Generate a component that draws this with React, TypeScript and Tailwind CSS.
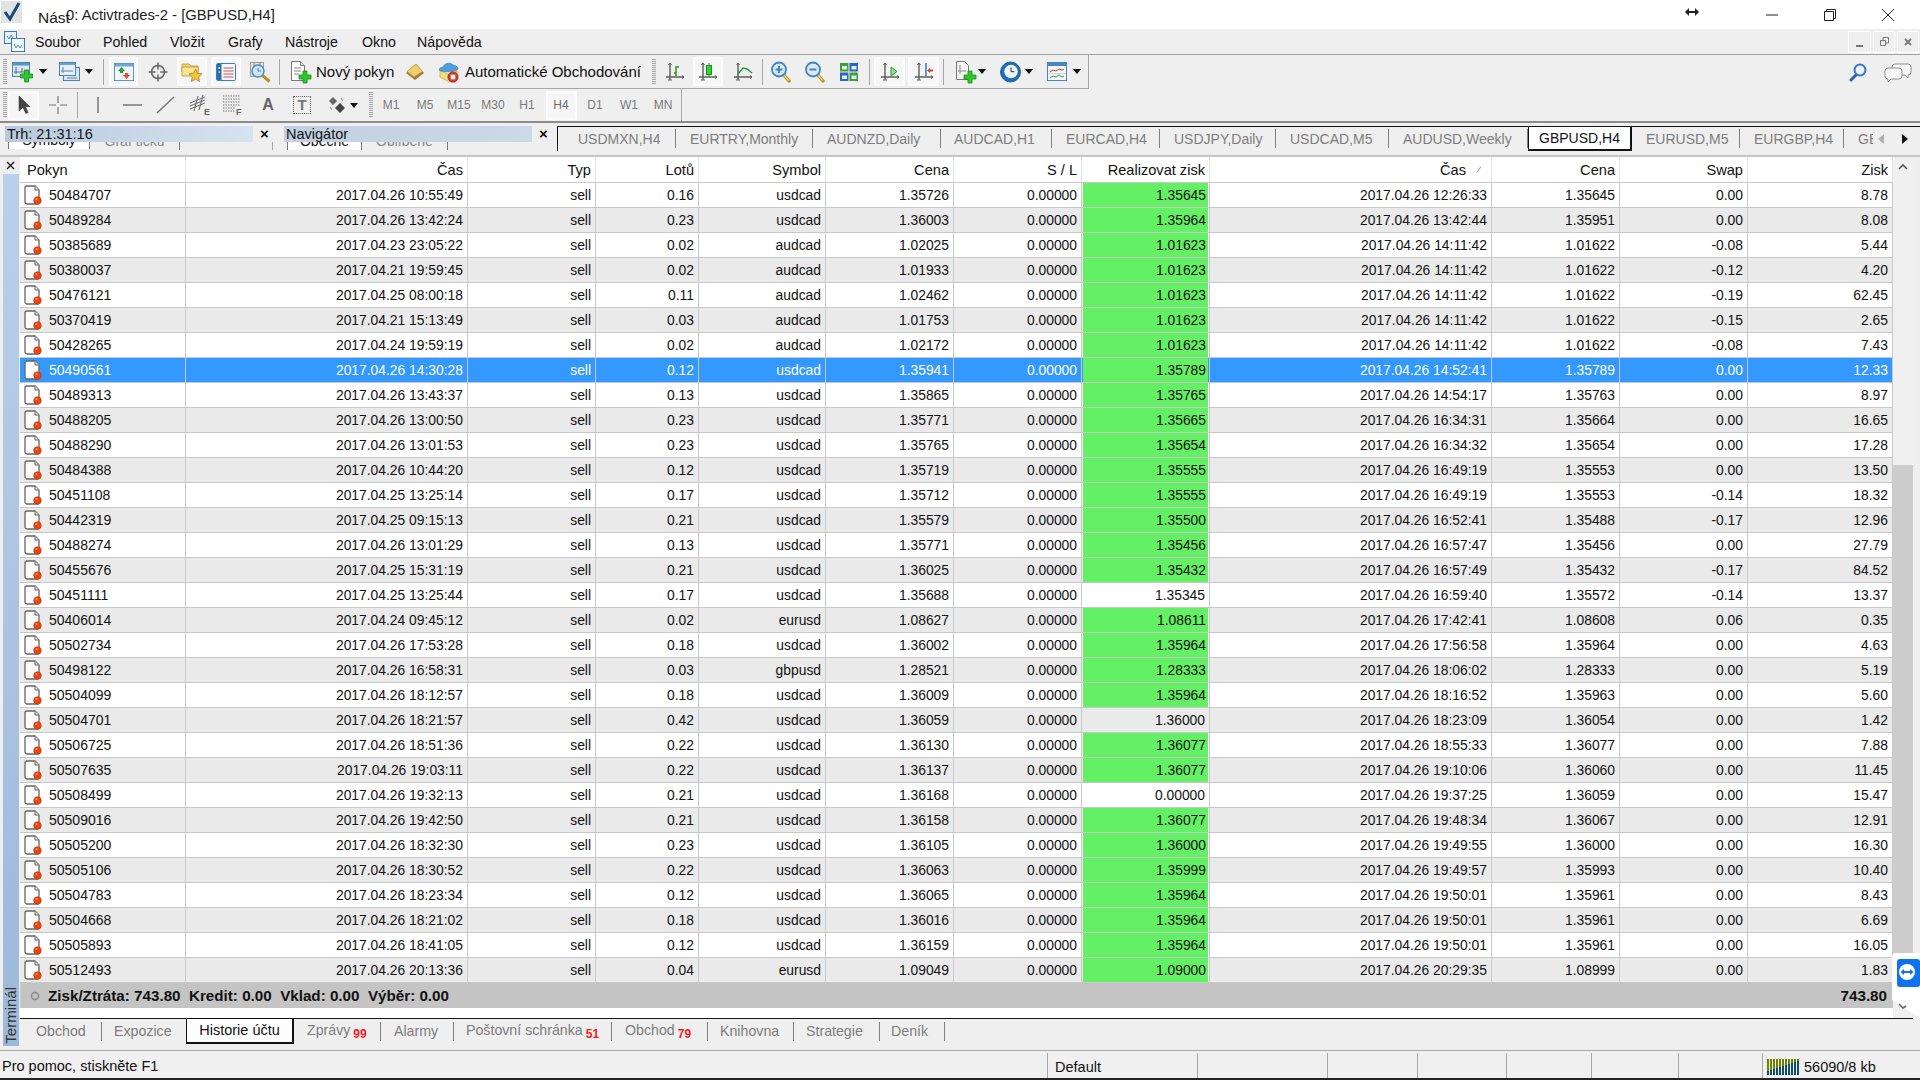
import React from "react";

type R = [string, string, string, string, string, string, string, string, string, string];
const d = "2017.04.26 ";
const rows: R[] = [
  ["50484707", "2017.04.26 10:55:49", "0.16", "usdcad", "1.35726", "1.35645", d + "12:26:33", "1.35645", "0.00", "8.78"],
  ["50489284", "2017.04.26 13:42:24", "0.23", "usdcad", "1.36003", "1.35964", d + "13:42:44", "1.35951", "0.00", "8.08"],
  ["50385689", "2017.04.23 23:05:22", "0.02", "audcad", "1.02025", "1.01623", d + "14:11:42", "1.01622", "-0.08", "5.44"],
  ["50380037", "2017.04.21 19:59:45", "0.02", "audcad", "1.01933", "1.01623", d + "14:11:42", "1.01622", "-0.12", "4.20"],
  ["50476121", "2017.04.25 08:00:18", "0.11", "audcad", "1.02462", "1.01623", d + "14:11:42", "1.01622", "-0.19", "62.45"],
  ["50370419", "2017.04.21 15:13:49", "0.03", "audcad", "1.01753", "1.01623", d + "14:11:42", "1.01622", "-0.15", "2.65"],
  ["50428265", "2017.04.24 19:59:19", "0.02", "audcad", "1.02172", "1.01623", d + "14:11:42", "1.01622", "-0.08", "7.43"],
  ["50490561", "2017.04.26 14:30:28", "0.12", "usdcad", "1.35941", "1.35789", d + "14:52:41", "1.35789", "0.00", "12.33"],
  ["50489313", "2017.04.26 13:43:37", "0.13", "usdcad", "1.35865", "1.35765", d + "14:54:17", "1.35763", "0.00", "8.97"],
  ["50488205", "2017.04.26 13:00:50", "0.23", "usdcad", "1.35771", "1.35665", d + "16:34:31", "1.35664", "0.00", "16.65"],
  ["50488290", "2017.04.26 13:01:53", "0.23", "usdcad", "1.35765", "1.35654", d + "16:34:32", "1.35654", "0.00", "17.28"],
  ["50484388", "2017.04.26 10:44:20", "0.12", "usdcad", "1.35719", "1.35555", d + "16:49:19", "1.35553", "0.00", "13.50"],
  ["50451108", "2017.04.25 13:25:14", "0.17", "usdcad", "1.35712", "1.35555", d + "16:49:19", "1.35553", "-0.14", "18.32"],
  ["50442319", "2017.04.25 09:15:13", "0.21", "usdcad", "1.35579", "1.35500", d + "16:52:41", "1.35488", "-0.17", "12.96"],
  ["50488274", "2017.04.26 13:01:29", "0.13", "usdcad", "1.35771", "1.35456", d + "16:57:47", "1.35456", "0.00", "27.79"],
  ["50455676", "2017.04.25 15:31:19", "0.21", "usdcad", "1.36025", "1.35432", d + "16:57:49", "1.35432", "-0.17", "84.52"],
  ["50451111", "2017.04.25 13:25:44", "0.17", "usdcad", "1.35688", "!1.35345", d + "16:59:40", "1.35572", "-0.14", "13.37"],
  ["50406014", "2017.04.24 09:45:12", "0.02", "eurusd", "1.08627", "1.08611", d + "17:42:41", "1.08608", "0.06", "0.35"],
  ["50502734", "2017.04.26 17:53:28", "0.18", "usdcad", "1.36002", "1.35964", d + "17:56:58", "1.35964", "0.00", "4.63"],
  ["50498122", "2017.04.26 16:58:31", "0.03", "gbpusd", "1.28521", "1.28333", d + "18:06:02", "1.28333", "0.00", "5.19"],
  ["50504099", "2017.04.26 18:12:57", "0.18", "usdcad", "1.36009", "1.35964", d + "18:16:52", "1.35963", "0.00", "5.60"],
  ["50504701", "2017.04.26 18:21:57", "0.42", "usdcad", "1.36059", "!1.36000", d + "18:23:09", "1.36054", "0.00", "1.42"],
  ["50506725", "2017.04.26 18:51:36", "0.22", "usdcad", "1.36130", "1.36077", d + "18:55:33", "1.36077", "0.00", "7.88"],
  ["50507635", "2017.04.26 19:03:11", "0.22", "usdcad", "1.36137", "1.36077", d + "19:10:06", "1.36060", "0.00", "11.45"],
  ["50508499", "2017.04.26 19:32:13", "0.21", "usdcad", "1.36168", "!0.00000", d + "19:37:25", "1.36059", "0.00", "15.47"],
  ["50509016", "2017.04.26 19:42:50", "0.21", "usdcad", "1.36158", "1.36077", d + "19:48:34", "1.36067", "0.00", "12.91"],
  ["50505200", "2017.04.26 18:32:30", "0.23", "usdcad", "1.36105", "1.36000", d + "19:49:55", "1.36000", "0.00", "16.30"],
  ["50505106", "2017.04.26 18:30:52", "0.22", "usdcad", "1.36063", "1.35999", d + "19:49:57", "1.35993", "0.00", "10.40"],
  ["50504783", "2017.04.26 18:23:34", "0.12", "usdcad", "1.36065", "1.35964", d + "19:50:01", "1.35961", "0.00", "8.43"],
  ["50504668", "2017.04.26 18:21:02", "0.18", "usdcad", "1.36016", "1.35964", d + "19:50:01", "1.35961", "0.00", "6.69"],
  ["50505893", "2017.04.26 18:41:05", "0.12", "usdcad", "1.36159", "1.35964", d + "19:50:01", "1.35961", "0.00", "16.05"],
  ["50512493", "2017.04.26 20:13:36", "0.04", "eurusd", "1.09049", "1.09000", d + "20:29:35", "1.08999", "0.00", "1.83"],
];

/* ---------- icons ---------- */
const Plus = ({ x, y, s = 1 }: { x: number; y: number; s?: number }) => (
  <path transform={`translate(${x} ${y}) scale(${s})`} d="M4 0h4v4h4v4H8v4H4V8H0V4h4z" fill="#2fc52f" stroke="#1b8f1b" strokeWidth="0.8" />
);
const Axes = () => (
  <g stroke="#5f5f5f" strokeWidth="1.4" fill="none">
    <path d="M5 2v17M1 16h18" />
    <path d="M3.500 4L5 2l1.500 2M3 19h4M17 14.500l2 1.500-2 1.500" strokeWidth="1" />
  </g>
);
const S = ({ w = 20, h = 22, c }: { w?: number; h?: number; c: React.ReactNode }) => (
  <svg width={w} height={h} viewBox={`0 0 ${w} ${h}`} className="block shrink-0">{c}</svg>
);
const Drop = () => (
  <svg width="8" height="5" viewBox="0 0 8 5" className="block"><path d="M0 0h8L4 5z" fill="#111" /></svg>
);
const Lens = ({ kind }: { kind: "+" | "-" }) => (
  <S c={<g>
    <path d="M12 13l6 7" stroke="#b98f2a" strokeWidth="3.4" strokeLinecap="round" />
    <path d="M12.500 13.500l5 6" stroke="#f2d676" strokeWidth="1.2" />
    <circle cx="8" cy="8.500" r="7" fill="#dbeaf8" stroke="#3f86c4" strokeWidth="1.8" />
    <path d={kind === "+" ? "M4.500 8.500h7M8 5v7" : "M4.500 8.500h7"} stroke="#3f86c4" strokeWidth="2" />
  </g>} />
);

const Icons = {
  NewChart: <S w={22} h={24} c={<g><rect x=".5" y="2.500" width="17" height="14" fill="#d7e6f5" stroke="#4d82b5" /><rect x="1" y="3" width="16" height="2.500" fill="#5d94c8" /><path d="M4 7v7M2 12h12M10 8v4" stroke="#5f6f7f" strokeWidth="1" /><Plus x={8.5} y={10} /></g>} />,
  Chart2: <S w={22} h={24} c={<g><rect x="4.500" y="7.500" width="16" height="13" fill="#d7e6f5" stroke="#4d82b5" /><rect x=".5" y="2.500" width="16" height="13" fill="#e6eff8" stroke="#4d82b5" /><rect x="1" y="3" width="15" height="2" fill="#6ea0d0" /><path d="M4 7v6M2 11h12M8 18h10" stroke="#6f7f8f" strokeWidth="1" /></g>} />,
  Market: <S w={20} h={20} c={<g><rect x=".5" y="1.500" width="19" height="17" fill="#f3f7fc" stroke="#5b97cf" /><rect x="1" y="2" width="18" height="2.500" fill="#6ea6da" /><path d="M4 9l3.500-4L11 9H9v2H6V9z" fill="#27a327" /><path d="M9 13h2v-2h3v2h2l-3.500 4z" fill="#e0522a" /></g>} />,
  Cross: <S c={<g fill="none" stroke="#666" strokeWidth="1.5"><circle cx="10" cy="11" r="6.500" /><path d="M10 1.500v7M10 13.500v7M.5 11h7M12.500 11h7" /></g>} />,
  FolderStar: <S w={22} h={22} c={<g><path d="M1 6V3h7l2 2h7v6H1z" fill="#f5d66b" stroke="#b9923a" strokeWidth=".8" /><path d="M1 6h16v9H1z" fill="#fbe68f" stroke="#b9923a" strokeWidth=".8" /><path d="M14.500 8l2 4.200 4.500.6-3.300 3.100.9 4.600-4.100-2.300-4.100 2.300.9-4.600L8 12.800l4.500-.6z" fill="#f0c53c" stroke="#a8842c" strokeWidth=".8" /></g>} />,
  Navig: <S w={20} h={20} c={<g><rect x=".5" y="1.500" width="19" height="17" rx="1" fill="#f2f6fb" stroke="#3d7fb8" /><rect x="1" y="2" width="4.500" height="16" fill="#2c6ea8" /><circle cx="3.200" cy="6" r="1" fill="#fff" /><circle cx="3.200" cy="10" r="1" fill="#f0c53c" /><path d="M7.500 6h10M7.500 9h10M7.500 12h10M7.500 15h10" stroke="#c85a55" strokeWidth="1" /></g>} />,
  ClockMag: <S w={23} h={22} c={<g><rect x="1.500" y="1.500" width="13" height="14" fill="#e6e2da" stroke="#a39f95" /><path d="M5 1v4M11 1v4" stroke="#8a8578" /><circle cx="9" cy="10" r="6" fill="#cfe3f6" stroke="#4a8fc6" strokeWidth="1.5" /><path d="M9 7v3h3" stroke="#4a7fb8" fill="none" /><path d="M13.500 14.500l7 6" stroke="#b98f2a" strokeWidth="3" /></g>} />,
  NewOrder: <S w={22} h={24} c={<g><path d="M1.500 1.500h9l4 4v15h-13z" fill="#fff" stroke="#777" /><path d="M10.500 1.500v4h4" fill="#ddd" stroke="#777" /><path d="M4 8h7M4 11h7M4 14h5" stroke="#8a8a8a" /><Plus x={9} y={11} /></g>} />,
  Book: <S c={<g><path d="M1 12L11 3l8 9-9 7z" fill="#a9783a" /><path d="M2 10.500L11 3l6.500 7.500L9 16z" fill="#f2cf6c" stroke="#b98f3a" strokeWidth=".7" /></g>} />,
  Hat: <S w={21} h={23} c={<g><path d="M2 10l9 5 8-4v6l-8 5-9-5z" fill="#f5dc7e" stroke="#bf9a3e" strokeWidth=".6" /><path d="M1 10c0-2 3-3 4-3 1-4 8-5 10-2 2 0 5 2 5 4-3 3-14 4-19 1z" fill="#4f9fdd" stroke="#2f78b5" strokeWidth=".6" /><circle cx="15" cy="17" r="5.200" fill="#d93a23" stroke="#a32310" strokeWidth=".6" /><rect x="12.700" y="14.700" width="4.600" height="4.600" fill="#fff" /></g>} />,
  Bars: <S c={<g><Axes /><path d="M11 15V6h3M11 12h-2" stroke="#2aa02a" strokeWidth="1.6" fill="none" /></g>} />,
  Candle: <S c={<g><Axes /><path d="M11 2v14" stroke="#1d8f1d" /><rect x="8.500" y="4.500" width="5" height="9" fill="#2dd82d" stroke="#1d8f1d" /></g>} />,
  Line: <S c={<g><Axes /><path d="M5 13l5-6 4 1 5 4" stroke="#2f8f4f" strokeWidth="1.5" fill="none" /></g>} />,
  Tile: <S c={<g><rect x="1" y="2" width="8.500" height="8.500" fill="#3aa03a" /><rect x="10.500" y="2" width="8.500" height="8.500" fill="#2f66c4" /><rect x="1" y="11.500" width="8.500" height="8.500" fill="#2f66c4" /><rect x="10.500" y="11.500" width="8.500" height="8.500" fill="#3aa03a" /><rect x="3" y="5" width="5" height="3.500" fill="#e8f2e8" /><rect x="12.500" y="5" width="5" height="3.500" fill="#e4ecf8" /><rect x="3" y="14.500" width="5" height="3.500" fill="#e4ecf8" /><rect x="12.500" y="14.500" width="5" height="3.500" fill="#e8f2e8" /></g>} />,
  Shift: <S c={<g><Axes /><path d="M11 6l6 4.500-6 4.500z" fill="#8ee08e" stroke="#2aa02a" /></g>} />,
  Auto: <S c={<g><Axes /><path d="M12 2v13" stroke="#2f6fb5" strokeWidth="1.4" /><path d="M19 8.500h-3V7l-3 2.500 3 2.500v-1.500h3z" fill="#d8432a" /></g>} />,
  Add: <S w={22} h={24} c={<g><path d="M1.500 1.500h8l4 4v14h-12z" fill="#f4f4f4" stroke="#777" /><path d="M5 5v9M3 11h8" stroke="#888" /><Plus x={9} y={11} /></g>} />,
  Clock: <S w={21} h={22} c={<g><circle cx="10.500" cy="11" r="10" fill="#1b6fb8" /><circle cx="10.500" cy="11" r="10" fill="none" stroke="#0e4f8c" strokeWidth=".8" /><circle cx="11" cy="10.500" r="6.800" fill="#eef6fd" /><path d="M11 6.500v4.200h3.500" stroke="#333" strokeWidth="1" fill="none" /></g>} />,
  Tpl: <S w={20} h={21} c={<g><rect x=".5" y="1.500" width="19" height="18" fill="#f2f7fc" stroke="#4a86bf" /><rect x="1" y="2" width="18" height="3" fill="#4a86bf" /><path d="M3 11l3-2 3 1 3-2 3 1 2-1" stroke="#c0492f" fill="none" /><path d="M3 17l3-2 3 1 3-2 3 2 2-1" stroke="#3f9a3f" fill="none" /><path d="M1 12.500h18" stroke="#c5d6e6" /></g>} />,
  Cursor: <S w={14} h={20} c={<path d="M2 1v15l4-3.500 2.800 6 2.400-1-2.800-5.800h4.600z" fill="#444" stroke="#333" strokeWidth=".5" />} />,
  Crossh: <S c={<path d="M10 2v7M10 13v7M1 11h7M12 11h7" stroke="#777" strokeWidth="1.2" />} />,
  VL: <S c={<path d="M10 3v16" stroke="#777" strokeWidth="1.500" />} />,
  HL: <S c={<path d="M1 11h19" stroke="#777" strokeWidth="1.500" />} />,
  TL: <S c={<path d="M1 19L18 3" stroke="#777" strokeWidth="1.500" />} />,
  FibE: <S w={22} h={24} c={<g stroke="#666" strokeWidth="1" fill="none"><path d="M1 10l15-6M1 13l15-6M1 16l15-6M5 18L9 3M10 17l4-15" /><text x="15" y="22" fontSize="9" fontWeight="700" fill="#666" stroke="none" fontFamily="Liberation Sans">E</text></g>} />,
  FibF: <S w={22} h={24} c={<g stroke="#777" strokeWidth="1" strokeDasharray="1.500 1" fill="none"><path d="M1 3h17M1 6h17M1 9h17M1 12h17M1 15h12M1 18h12" /><text x="14" y="22" fontSize="9" fontWeight="700" fill="#666" stroke="none" strokeDasharray="0" fontFamily="Liberation Sans">F</text></g>} />,
  Shapes: <S w={20} h={20} c={<g><path d="M6 2l4 4-4 4-4-4z" fill="#666" /><path d="M13 8l5 5-5 5-5-5z" fill="#444" /><path d="M3 12l2 3M14 3l2 3" stroke="#999" /></g>} />,
  Doc: <svg width="18" height="20" viewBox="0 0 18 20" className="block shrink-0"><path d="M1 3a2 2 0 0 1 2-2h8l4 4v12a2 2 0 0 1-2 2H3a2 2 0 0 1-2-2z" fill="#fbfbfb" stroke="#666" strokeWidth="1.300" /><path d="M11 1v4h4" fill="#e2e2e2" stroke="#666" /><circle cx="13.500" cy="15.500" r="3.800" fill="#e8450f" stroke="#b8380c" strokeWidth=".6" /><circle cx="12.500" cy="14.300" r="1" fill="#ff9a6a" /></svg>,
  Search: <S w={18} h={20} c={<g><path d="M8 12l-6 6" stroke="#2f5fae" strokeWidth="3" strokeLinecap="round" /><circle cx="11" cy="8" r="5.500" fill="#e8f2fb" stroke="#3a72c0" strokeWidth="2" /></g>} />,
  Chat: <S w={28} h={20} c={<g fill="#f7f7f7" stroke="#909090"><path d="M11 2h13a3 3 0 0 1 3 3v5a3 3 0 0 1-3 3v3l-3-3H11a3 3 0 0 1-3-3V5a3 3 0 0 1 3-3z" /><path d="M4 6h11a3 3 0 0 1 3 3v5a3 3 0 0 1-3 3H7l-3 3v-3a3 3 0 0 1-3-3V9a3 3 0 0 1 3-3z" /></g>} />,
};

const Grip = ({ cls }: { cls: string }) => (
  <div className={`${cls} h-[26px] w-[4px] shrink-0 bg-[repeating-linear-gradient(to_bottom,#a6a6a6_0,#a6a6a6_1px,transparent_1px,transparent_2px)]`} />
);
const Sep = ({ cls }: { cls: string }) => <div className={`${cls} w-px h-[26px] bg-[#a8a8a8] shrink-0`} />;
const Slot = ({ cls, children }: { cls: string; children: React.ReactNode }) => (
  <div className={`${cls} h-full flex items-center justify-center shrink-0`}>{children}</div>
);
const Box = ({ cls, children }: { cls: string; children: React.ReactNode }) => (
  <div className={`${cls} h-[29px] flex items-center justify-center shrink-0 border-2 border-[#fbfbfb] bg-[#f6f6f6] [background-image:radial-gradient(#e4e4e4_0.5px,transparent_0.6px)] [background-size:2px_2px]`}>{children}</div>
);
const TF = ({ t, on }: { t: string; on?: boolean }) =>
  on ? (
    <div className="w-[34px] h-full flex items-center justify-center shrink-0">
      <div className="w-[31px] h-[29px] flex items-center justify-center border-2 border-[#fbfbfb] bg-[#f6f6f6] text-[12px] text-[#6e6e6e]">{t}</div>
    </div>
  ) : (
    <div className="w-[34px] h-full flex items-center justify-center shrink-0 text-[12px] text-[#7a7a7a]">{t}</div>
  );

const chartTabs = [
  { t: "USDMXN,H4", w: "w-[118px]", p: "pl-[20px]" },
  { t: "EURTRY,Monthly", w: "w-[137px]", p: "pl-[14px]" },
  { t: "AUDNZD,Daily", w: "w-[128px]", p: "pl-[14px]" },
  { t: "AUDCAD,H1", w: "w-[111px]", p: "pl-[13px]" },
  { t: "EURCAD,H4", w: "w-[108px]", p: "pl-[14px]" },
  { t: "USDJPY,Daily", w: "w-[116px]", p: "pl-[14px]" },
  { t: "USDCAD,M5", w: "w-[113px]", p: "pl-[14px]" },
  { t: "AUDUSD,Weekly", w: "w-[139px]", p: "pl-[14px]" },
];
const chartTabs2 = [
  { t: "EURUSD,M5", w: "w-[108px]", p: "pl-[14px]" },
  { t: "EURGBP,H4", w: "w-[104px]", p: "pl-[14px]" },
];

const cols = [
  { w: "w-[166px]", h: "Pokyn" },
  { w: "w-[282px]", h: "Čas" },
  { w: "w-[128px]", h: "Typ" },
  { w: "w-[103px]", h: "Lotů" },
  { w: "w-[127px]", h: "Symbol" },
  { w: "w-[128px]", h: "Cena" },
  { w: "w-[128px]", h: "S / L" },
  { w: "w-[128px]", h: "Realizovat zisk" },
  { w: "w-[282px]", h: "Čas" },
  { w: "w-[128px]", h: "Cena" },
  { w: "w-[128px]", h: "Swap" },
  { w: "w-[145px]", h: "Zisk" },
];

const Cell = ({ w, v }: { w: string; v: string }) => (
  <div className={`${w} h-full shrink-0 flex items-center justify-end pr-[4px] border-r border-[#c8c8c8] whitespace-nowrap`}>{v}</div>
);

const Row = ({ r, i }: { r: R; i: number }) => {
  const sel = i === 7;
  const bg = sel ? "bg-[#3399ff] text-white" : i % 2 ? "bg-[#eaeaea] text-[#111]" : "bg-white text-[#111]";
  const tp = r[5].startsWith("!");
  return (
    <div className={`h-[25px] flex border-b border-[#c8c8c8] text-[13.85px] ${bg}`}>
      <div className="w-[166px] h-full shrink-0 flex items-center pl-[4px] gap-[7px] border-r border-[#c8c8c8] text-[14px]">
        {Icons.Doc}
        <span>{r[0]}</span>
      </div>
      <Cell w="w-[282px]" v={r[1]} />
      <Cell w="w-[128px]" v="sell" />
      <Cell w="w-[103px]" v={r[2]} />
      <Cell w="w-[127px]" v={r[3]} />
      <Cell w="w-[128px]" v={r[4]} />
      <Cell w="w-[128px]" v="0.00000" />
      {tp ? (
        <Cell w="w-[128px]" v={r[5].slice(1)} />
      ) : (
        <div className="w-[128px] h-full shrink-0 pl-px border-r border-[#c8c8c8]">
          <div className="w-[125px] h-full flex items-center justify-end pr-[2px] bg-[#64f064] text-[#111]">{r[5]}</div>
        </div>
      )}
      <Cell w="w-[282px]" v={r[6]} />
      <Cell w="w-[128px]" v={r[7]} />
      <Cell w="w-[128px]" v={r[8]} />
      <Cell w="w-[145px]" v={r[9]} />
    </div>
  );
};

const BTab = ({ t, w, p, n }: { t: string; w: string; p: string; n?: string }) => (
  <div className={`${w} h-full shrink-0 flex items-center`}>
    <div className={`${p} flex-1 flex items-start whitespace-nowrap text-[#7d7d7d]`}>
      <span>{t}</span>
      {n && <span className="ml-[3px] mt-[6px] text-[12px] leading-[14px] font-bold text-[#ee1c25]">{n}</span>}
    </div>
    <div className="w-px h-[19px] bg-[#808080] shrink-0" />
  </div>
);

export default function App() {
  return (
    <div className="relative w-[1920px] h-[1080px] overflow-hidden flex flex-col bg-[#efefef] font-['Liberation_Sans',sans-serif] text-[14px] leading-[18px] text-[#111]">
      {/* title */}
      <div className="h-[29px] shrink-0 bg-white flex items-center text-[14.8px]">
        <svg width="22" height="22" viewBox="0 0 22 22" className="block ml-[1px] mb-[6px] shrink-0"><rect width="21" height="22" fill="#dfe3e6" /><path d="M4 11l5 7 9-16" fill="none" stroke="#1d4a73" strokeWidth="3" /></svg>
        <span className="ml-[15px] mt-[6px] w-[28px] whitespace-nowrap text-[15.5px] text-[#222]">Nást</span>
        <span className="whitespace-nowrap text-[#222]">0: Activtrades-2 - [GBPUSD,H4]</span>
        <div className="flex-1" />
        <svg width="14" height="8" viewBox="0 0 14 8" className="block mr-[67px] mb-[5px]"><path d="M0 4l4-4v3h6V0l4 4-4 4V5H4v3z" fill="#222" /></svg>
        <svg width="12" height="2" viewBox="0 0 12 2" className="block mr-[46px]"><path d="M0 1h12" stroke="#222" /></svg>
        <svg width="12" height="12" viewBox="0 0 12 12" className="block mr-[46px]"><path d="M.5 2.500h9v9h-9zM2.500 2.500v-2h9v9h-2" fill="none" stroke="#222" /></svg>
        <svg width="12" height="12" viewBox="0 0 12 12" className="block mr-[26px]"><path d="M0 0l12 12M12 0L0 12" stroke="#222" /></svg>
      </div>
      {/* menu */}
      <div className="h-[26px] shrink-0 border-b border-[#a0a0a0] flex items-center relative text-[14.2px]">
        <svg width="21" height="21" viewBox="0 0 21 21" className="block ml-[4px] shrink-0"><rect x=".5" y=".5" width="12" height="12" fill="#e8f0fa" stroke="#3a78c0" /><rect x="7.500" y="7.500" width="13" height="13" fill="#f2f7fc" stroke="#3a78c0" /><path d="M3 5l2 3 2-4 2 3M10 13l2 4 2-3 2 3 2-3" fill="none" stroke="#4a86bf" /></svg>
        <span className="ml-[10px] w-[68px]">Soubor</span>
        <span className="w-[67px]">Pohled</span>
        <span className="w-[58px]">Vložit</span>
        <span className="w-[57px]">Grafy</span>
        <span className="w-[77px]">Nástroje</span>
        <span className="w-[55px]">Okno</span>
        <span>Nápověda</span>
        <div className="flex-1" />
        <div className="flex gap-[2px] mr-px">
          <div className="w-[23px] h-[22px] border border-white flex items-end justify-center pb-[5px]"><div className="w-[7px] h-[2px] bg-[#777]" /></div>
          <div className="w-[22px] h-[22px] border border-white flex items-center justify-center"><svg width="9" height="9" viewBox="0 0 9 9"><path d="M.5 3.500h5v5h-5zM3 3V.5h5.500V6H6" fill="none" stroke="#777" /></svg></div>
          <div className="w-[22px] h-[22px] border border-white flex items-center justify-center"><svg width="8" height="8" viewBox="0 0 8 8"><path d="M1 1l6 6M7 1L1 7" stroke="#777" strokeWidth="1.800" /></svg></div>
        </div>
      </div>
      {/* toolbar 1 */}
      <div className="h-[34px] shrink-0 flex items-center">
        <div className="w-[1089px] h-full shrink-0 flex items-center border-r border-b border-[#a8a8a8]">
          <Grip cls="ml-[3px]" />
          <Slot cls="ml-[5px] w-[22px]">{Icons.NewChart}</Slot>
          <Slot cls="ml-[5px] w-[8px]"><Drop /></Slot>
          <Slot cls="ml-[12px] w-[22px]">{Icons.Chart2}</Slot>
          <Slot cls="ml-[4px] w-[8px]"><Drop /></Slot>
          <Sep cls="ml-[10px]" />
          <Box cls="ml-[5px] w-[29px]">{Icons.Market}</Box>
          <Slot cls="ml-[10px] w-[20px]">{Icons.Cross}</Slot>
          <Box cls="ml-[9px] w-[30px]">{Icons.FolderStar}</Box>
          <Box cls="ml-[4px] w-[30px]">{Icons.Navig}</Box>
          <Slot cls="ml-[8px] w-[22px]">{Icons.ClockMag}</Slot>
          <Sep cls="ml-[8px]" />
          <Slot cls="ml-[10px] w-[22px]">{Icons.NewOrder}</Slot>
          <div className="ml-[4px] w-[77px] shrink-0 whitespace-nowrap text-[15px]">Nový pokyn</div>
          <Slot cls="ml-[12px] w-[20px]">{Icons.Book}</Slot>
          <Slot cls="ml-[13px] w-[21px]">{Icons.Hat}</Slot>
          <div className="ml-[6px] w-[177px] shrink-0 whitespace-nowrap text-[15px]">Automatické Obchodování</div>
          <Grip cls="ml-[10px]" />
          <Slot cls="ml-[9px] w-[20px]">{Icons.Bars}</Slot>
          <Box cls="ml-[8px] w-[30px]">{Icons.Candle}</Box>
          <Slot cls="ml-[10px] w-[20px]">{Icons.Line}</Slot>
          <Sep cls="ml-[9px]" />
          <Slot cls="ml-[8px] w-[20px]"><Lens kind="+" /></Slot>
          <Slot cls="ml-[14px] w-[20px]"><Lens kind="-" /></Slot>
          <Slot cls="ml-[14px] w-[20px]">{Icons.Tile}</Slot>
          <Sep cls="ml-[10px]" />
          <Box cls="ml-[4px] w-[31px]">{Icons.Shift}</Box>
          <Box cls="ml-[3px] w-[31px]">{Icons.Auto}</Box>
          <Sep cls="ml-[4px]" />
          <Slot cls="ml-[11px] w-[22px]">{Icons.Add}</Slot>
          <Slot cls="ml-[1px] w-[8px]"><Drop /></Slot>
          <Slot cls="ml-[14px] w-[20px]">{Icons.Clock}</Slot>
          <Slot cls="ml-[5px] w-[8px]"><Drop /></Slot>
          <Slot cls="ml-[14px] w-[20px]">{Icons.Tpl}</Slot>
          <Slot cls="ml-[6px] w-[8px]"><Drop /></Slot>
        </div>
        <div className="flex-1" />
        <Slot cls="w-[18px]">{Icons.Search}</Slot>
        <Slot cls="ml-[17px] mr-[8px] w-[28px]">{Icons.Chat}</Slot>
      </div>
      {/* toolbar 2 */}
      <div className="h-[34px] shrink-0 border-b-2 border-[#8c8c8c] flex items-center">
        <div className="w-[682px] h-full shrink-0 flex items-center border-r border-[#a8a8a8]">
          <Grip cls="ml-[3px]" />
          <Box cls="ml-[1px] w-[31px]">{Icons.Cursor}</Box>
          <Slot cls="ml-[9px] w-[20px]">{Icons.Crossh}</Slot>
          <Sep cls="ml-[9px]" />
          <Slot cls="ml-[10px] w-[20px]">{Icons.VL}</Slot>
          <Slot cls="ml-[14px] w-[20px]">{Icons.HL}</Slot>
          <Slot cls="ml-[14px] w-[20px]">{Icons.TL}</Slot>
          <Slot cls="ml-[14px] w-[20px]">{Icons.FibE}</Slot>
          <Slot cls="ml-[13px] w-[20px]">{Icons.FibF}</Slot>
          <Slot cls="ml-[15px] w-[20px]"><span className="text-[16px] font-bold text-[#666]">A</span></Slot>
          <Slot cls="ml-[14px] w-[20px]">
            <div className="w-[18px] h-[18px] border border-dotted border-[#666] flex items-center justify-center text-[15px] font-bold text-[#777]">T</div>
          </Slot>
          <Slot cls="ml-[15px] w-[20px]">{Icons.Shapes}</Slot>
          <Slot cls="ml-[3px] w-[8px]"><Drop /></Slot>
          <Grip cls="ml-[11px]" />
          <div className="ml-px h-full flex items-center">
            <TF t="M1" /><TF t="M5" /><TF t="M15" /><TF t="M30" /><TF t="H1" /><TF t="H4" on /><TF t="D1" /><TF t="W1" /><TF t="MN" />
          </div>
        </div>
      </div>
      {/* docked caption / chart tabs strip */}
      <div className="h-[34px] shrink-0 border-b-2 border-[#c4c4c4] flex">
        <div className="w-[279px] shrink-0 pt-[3px] pl-[5px] text-[14.5px]">
          <div className="flex items-center h-[16px]">
            <div className="w-[248px] h-[16px] pl-[2px] flex items-center bg-gradient-to-r from-[#b9c9dd] to-[#d6e3f0] text-[#111]">Trh: 21:31:16</div>
            <span className="ml-[7px] w-[8px] text-[15px] font-bold">×</span>
          </div>
          <div className="h-[8px] overflow-hidden flex w-[268px] border-r border-[#a8a8a8]">
            <div className="w-[82px] ml-[3px] h-full overflow-hidden bg-white border-x border-[#777] text-center text-[14px] leading-[14px] -mt-px"><div className="-mt-[8px]">Symboly</div></div>
            <div className="w-[90px] h-full overflow-hidden border-r border-[#777] text-center text-[14px] leading-[14px] text-[#888]"><div className="-mt-[8px]">Graf ticků</div></div>
          </div>
        </div>
        <div className="w-[278px] shrink-0 pt-[3px] pl-[5px] text-[14.5px]">
          <div className="flex items-center h-[16px]">
            <div className="w-[248px] h-[16px] pl-[2px] flex items-center bg-gradient-to-r from-[#c1cfe0] to-[#ccd9e7] text-[#111]">Navigátor</div>
            <span className="ml-[7px] w-[8px] text-[15px] font-bold">×</span>
          </div>
          <div className="h-[8px] overflow-hidden flex w-[268px]">
            <div className="w-[75px] ml-[3px] h-full overflow-hidden bg-white border-x border-[#777] text-center text-[14px] leading-[14px]"><div className="-mt-[8px]">Obecné</div></div>
            <div className="w-[86px] h-full overflow-hidden border-r border-[#777] text-center text-[14px] leading-[14px] text-[#888]"><div className="-mt-[8px]">Oblíbené</div></div>
          </div>
        </div>
        <div className="flex-1 mt-[3px] h-[25px] pb-px min-w-0 border-t border-l border-[#111] flex items-center">
          {chartTabs.map((t) => (
            <BTab key={t.t} t={t.t} w={t.w} p={t.p} />
          ))}
          <div className="w-[104px] h-[24px] self-start shrink-0 bg-white border-l border-r-2 border-b-2 border-[#111] flex items-center justify-center text-[#111]">GBPUSD,H4</div>
          {chartTabs2.map((t) => (
            <BTab key={t.t} t={t.t} w={t.w} p={t.p} />
          ))}
          <div className="w-[29px] overflow-hidden shrink-0 pl-[14px] text-[#7d7d7d] whitespace-nowrap">GBP</div>
          <svg width="8" height="10" viewBox="0 0 8 10" className="block ml-[4px] shrink-0"><path d="M7 0v10L1 5z" fill="#b0b0b0" /></svg>
          <svg width="8" height="10" viewBox="0 0 8 10" className="block ml-[16px] shrink-0"><path d="M1 0v10l6-5z" fill="#111" /></svg>
        </div>
      </div>
      {/* terminal */}
      <div className="h-[889px] shrink-0 flex">
        <div className="w-[20px] shrink-0 flex flex-col">
          <div className="h-[17px] flex items-center justify-center">
            <svg width="9" height="9" viewBox="0 0 9 9"><path d="M1 1l7 7M8 1L1 8" stroke="#111" strokeWidth="1.400" /></svg>
          </div>
          <div className="flex-1 ml-[3px] w-[16px] bg-gradient-to-b from-[#b9d0ea] to-[#9db9d9] flex items-end justify-center pb-[2px]">
            <span className="[writing-mode:vertical-rl] rotate-180 text-[15px] text-[#333]">Terminál</span>
          </div>
        </div>
        <div className="w-[1894px] shrink-0 flex flex-col">
          <div className="h-[861px] shrink-0 flex">
            <div className="w-[1873px] shrink-0 flex flex-col bg-white">
              <div className="h-[26px] shrink-0 flex bg-white border-b border-[#c8c8c8] text-[14.6px]">
                {cols.map((c, i) =>
                  i === 0 ? (
                    <div key={i} className={`${c.w} flex items-center pl-[7px] border-r border-[#e4e4e4] shrink-0`}>{c.h}</div>
                  ) : i === 8 ? (
                    <div key={i} className={`${c.w} flex items-center justify-end pr-[9px] border-r border-[#e4e4e4] shrink-0`}>
                      <span>{c.h}</span>
                      <svg width="6" height="7" viewBox="0 0 6 7" className="block ml-[10px]"><path d="M1 6.500L5 .5" stroke="#999" /></svg>
                    </div>
                  ) : (
                    <div key={i} className={`${c.w} flex items-center justify-end pr-[4px] border-r border-[#e4e4e4] shrink-0 whitespace-nowrap`}>{c.h}</div>
                  )
                )}
              </div>
              {rows.map((r, i) => (
                <Row key={r[0]} r={r} i={i} />
              ))}
              <div className="h-[25px] shrink-0 bg-[#c4c4c4] flex items-center font-bold text-[#111] text-[15.2px]">
                <svg width="10" height="10" viewBox="0 0 10 10" className="block ml-[10px] shrink-0"><circle cx="5" cy="5" r="3.500" fill="#c4c4c4" stroke="#8a8a8a" strokeWidth="1.500" /></svg>
                <span className="ml-[8px] whitespace-pre">Zisk/Ztráta: 743.80  Kredit: 0.00  Vklad: 0.00  Výběr: 0.00</span>
                <div className="flex-1" />
                <span className="mr-[6px]">743.80</span>
              </div>
            </div>
            <div className="w-[20px] shrink-0 flex flex-col bg-[#f0f0f0]">
              <div className="h-[20px] flex items-center justify-center">
                <svg width="10" height="6" viewBox="0 0 10 6"><path d="M1 5l4-4 4 4" fill="none" stroke="#555" strokeWidth="1.600" /></svg>
              </div>
              <div className="h-[288px]" />
              <div className="h-[530px] bg-[#cdcdcd]" />
            </div>
          </div>
          <div className="h-[28px] shrink-0 border-t border-[#111] flex items-center pb-[3px] mr-px text-[14.2px]">
            <BTab t="Obchod" w="w-[82px]" p="pl-[16px]" />
            <div className="w-[84px] h-full shrink-0 flex items-center pl-[12px] text-[#7d7d7d]">Expozice</div>
            <div className="w-[108px] h-[25px] self-start pb-[1px] shrink-0 bg-white border-l border-r-2 border-b-2 border-[#111] flex items-center justify-center text-[14.5px]">Historie účtu</div>
            <BTab t="Zprávy" n="99" w="w-[87px]" p="pl-[13px]" />
            <BTab t="Alarmy" w="w-[73px]" p="pl-[13px]" />
            <BTab t="Poštovní schránka" n="51" w="w-[158px]" p="pl-[12px]" />
            <BTab t="Obchod" n="79" w="w-[96px]" p="pl-[13px]" />
            <BTab t="Knihovna" w="w-[86px]" p="pl-[12px]" />
            <BTab t="Strategie" w="w-[86px]" p="pl-[12px]" />
            <BTab t="Deník" w="w-[65px]" p="pl-[11px]" />
          </div>
        </div>
      </div>
      <div className="h-[5px] shrink-0 border-b border-[#a8a8a8] bg-[#efefef]" />
      {/* status */}
      <div className="h-[27px] shrink-0 flex items-center bg-[#f0f0f0] text-[14.5px]">
        <div className="w-[1047px] shrink-0 pl-[2px] pt-[3px] whitespace-nowrap">Pro pomoc, stiskněte F1</div>
        <div className="w-[150px] h-full mt-[4px] shrink-0 flex items-center pl-[7px] border-l border-[#a8a8a8]">Default</div>
        <div className="w-[130px] h-full mt-[4px] shrink-0 border-l border-[#a8a8a8]" />
        <div className="w-[90px] h-full mt-[4px] shrink-0 border-l border-[#a8a8a8]" />
        <div className="w-[89px] h-full mt-[4px] shrink-0 border-l border-[#a8a8a8]" />
        <div className="w-[85px] h-full mt-[4px] shrink-0 border-l border-[#a8a8a8]" />
        <div className="w-[87px] h-full mt-[4px] shrink-0 border-l border-[#a8a8a8]" />
        <div className="w-[84px] h-full mt-[4px] shrink-0 border-l border-[#a8a8a8]" />
        <div className="flex-1 h-full mt-[4px] flex items-center pl-[4px] border-l border-[#a8a8a8] whitespace-nowrap">
          <svg width="32" height="16" viewBox="0 0 32 16" className="block shrink-0">
            {Array.from({ length: 11 }).map((_, i) => (
              <g key={i}>
                <rect x={i * 3} y="0" width="2" height="16" fill="#6f7f00" />
                <rect x={i * 3} y={12 - i} width="2" height={4 + i} fill="#0f4d6f" />
              </g>
            ))}
          </svg>
          <span className="ml-[5px]">56090/8 kb</span>
        </div>
      </div>
      <div className="h-[2px] shrink-0 bg-[#222]" />
      {/* TeamViewer widget overlay */}
      <svg width="29" height="68" viewBox="0 0 29 68" className="absolute left-[1891px] top-[952px] block">
        <path d="M5 1h24v65L1 48V5a4 4 0 0 1 4-4z" fill="#fff" />
        <rect x="6" y="7" width="23" height="28" rx="3" fill="#0e72ed" />
        <circle cx="16" cy="20" r="8" fill="#fff" />
        <path d="M9.500 20l3.500-3v2h6v-2l3.500 3-3.500 3v-2h-6v2z" fill="#0e72ed" />
        <path d="M8 52l4 4 3-2" fill="none" stroke="#666" strokeWidth="1.600" />
      </svg>
    </div>
  );
}
